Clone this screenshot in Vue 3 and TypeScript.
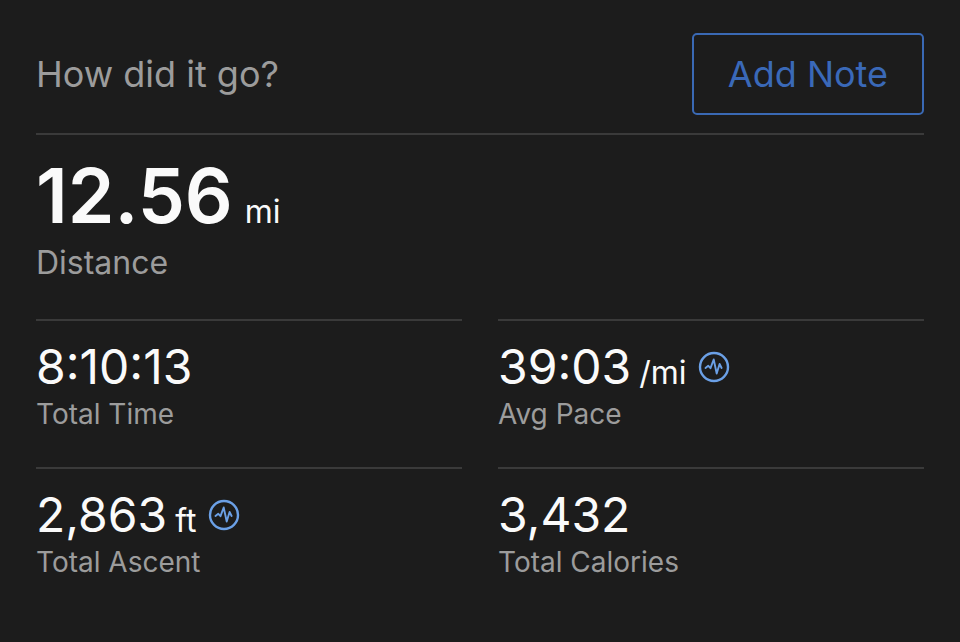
<script setup lang="ts">
interface Stat { value: string; unit?: string; label: string; graph?: boolean }
const stats: Stat[] = [
  { value: '8:10:13', label: 'Total Time' },
  { value: '39:03', unit: '/mi', label: 'Avg Pace', graph: true },
  { value: '2,863', unit: 'ft', label: 'Total Ascent', graph: true },
  { value: '3,432', label: 'Total Calories' },
]
</script>

<template>
  <main class="summary">
    <header class="note">
      <span class="prompt">How did it go?</span>
      <button type="button" class="add">Add Note</button>
    </header>
    <section class="distance">
      <div class="reading"><span class="total">12.56</span><span class="unit large">mi</span></div>
      <div class="caption">Distance</div>
    </section>
    <div class="grid">
      <section v-for="s in stats" :key="s.label" class="stat">
        <div class="reading">
          <span class="value">{{ s.value }}</span>
          <span v-if="s.unit" class="unit">{{ s.unit }}</span>
          <button v-if="s.graph" type="button" class="graph" :aria-label="s.label + ' graph'">
            <svg viewBox="0 0 32 32" width="32" height="32" fill="none" stroke="currentColor" stroke-linejoin="round" stroke-linecap="round">
              <circle cx="16" cy="16" r="14" stroke-width="2.4" />
              <path d="M7.5 17L10.3 14.8L12.5 17.2L15.7 8.5L18.7 22.5L21.6 13L23.6 17" stroke-width="1.9" />
            </svg>
          </button>
        </div>
        <div class="label">{{ s.label }}</div>
      </section>
    </div>
  </main>
</template>

<style>
body { background: #1c1c1c; }
</style>

<style scoped>
.summary { padding: 33px 36px; color: #fafafa; font-family: Inter, "Liberation Sans", sans-serif; }
.note { display: flex; align-items: center; justify-content: space-between; padding-bottom: 18px; border-bottom: 2px solid #3a3a3a; }
.prompt { font-size: 36px; color: #9c9c9c; }
.add { padding: 17px 34px; line-height: 44px; border: 2px solid #3a69b4; border-radius: 5px; background: transparent; color: #3a69b8; font-family: inherit; font-size: 36px; }
.reading { display: flex; align-items: baseline; }
.distance { padding: 21px 0 36px; }
.total { font-size: 75px; line-height: 80px; font-weight: 600; }
.unit { font-size: 32px; margin-left: 8px; }
.unit.large { margin-left: 12px; }
.caption { font-size: 32px; line-height: 40px; color: #9c9c9c; margin-top: 7px; }
.grid { display: grid; grid-template-columns: 1fr 1fr; column-gap: 36px; }
.stat { border-top: 2px solid #3a3a3a; padding: 18px 0 35px; }
.value { font-size: 48px; line-height: 56px; }
.label { font-size: 28px; line-height: 36px; color: #9c9c9c; margin-top: 1px; }
.graph { display: flex; align-self: center; margin-left: 12px; padding: 0; border: 0; background: none; color: #6ba0e6; }
</style>
